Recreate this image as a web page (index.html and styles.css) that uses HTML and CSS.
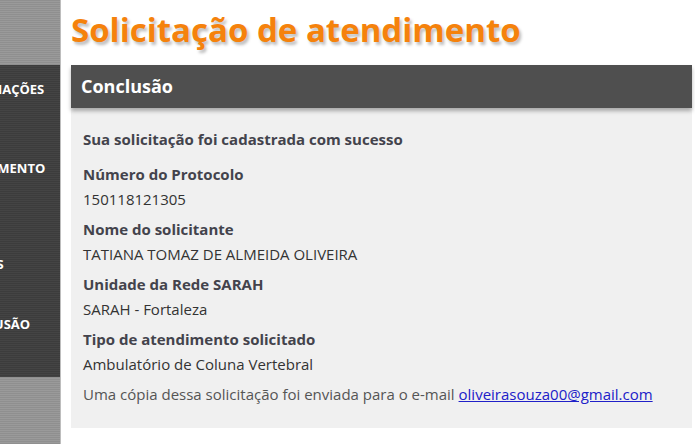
FILE: index.html
```html
<!DOCTYPE html>
<html lang="pt-BR">
<head>
<meta charset="utf-8">
<title>Solicitação de atendimento</title>
<link rel="stylesheet" href="styles.css">
</head>
<body>
<aside class="sidebar">
  <div class="side-top"></div>
  <nav class="side-nav">
    <ul class="steps">
      <li class="step step-1">INFORMAÇÕES</li>
      <li class="step step-2">ATENDIMENTO</li>
      <li class="step step-3">PESSOAIS</li>
      <li class="step step-4">CONCLUSÃO</li>
    </ul>
  </nav>
  <div class="side-bottom"></div>
</aside>
<main class="main">
  <h1 class="title">Solicitação de atendimento</h1>
  <section class="panel">
    <h2 class="panel-header">Conclusão</h2>
    <div class="panel-body">
      <p class="success">Sua solicitação foi cadastrada com sucesso</p>
      <div class="field">
        <div class="label">Número do Protocolo</div>
        <div class="value">150118121305</div>
      </div>
      <div class="field">
        <div class="label">Nome do solicitante</div>
        <div class="value">TATIANA TOMAZ DE ALMEIDA OLIVEIRA</div>
      </div>
      <div class="field">
        <div class="label">Unidade da Rede SARAH</div>
        <div class="value">SARAH - Fortaleza</div>
      </div>
      <div class="field">
        <div class="label">Tipo de atendimento solicitado</div>
        <div class="value">Ambulatório de Coluna Vertebral</div>
      </div>
      <p class="note">Uma cópia dessa solicitação foi enviada para o e-mail <a href="#" class="mail">oliveirasouza00@gmail.com</a></p>
    </div>
  </section>
</main>
</body>
</html>
```
FILE: styles.css
```css
html, body {
  margin: 0;
  padding: 0;
  height: 100%;
}
body {
  display: flex;
  font-family: "Open Sans", "Noto Sans", sans-serif;
  background: #fff;
  overflow: hidden;
}
.sidebar {
  width: 61px;
  flex: none;
  display: flex;
  flex-direction: column;
  border-right: 1px solid #bdbdbd;
  box-sizing: border-box;
}
.side-top, .side-bottom {
  background: repeating-linear-gradient(to bottom, #8f8f8f 0, #8f8f8f 1px, #9a9a9a 1px, #9a9a9a 2px);
}
.side-top {
  height: 65px;
}
.side-bottom {
  flex: 1;
}
.side-nav {
  height: 312px;
  overflow: hidden;
  background: repeating-linear-gradient(to bottom, #3c3c3c 0, #3c3c3c 1px, #444 1px, #444 2px);
}
.steps {
  list-style: none;
  margin: 0 0 0 -51px;
  padding: 0;
  white-space: nowrap;
}
.step {
  color: #fff;
  font-weight: 700;
  font-size: 13px;
  line-height: 16px;
}
.step-1 { padding-top: 16px; }
.step-2 { padding-top: 63px; }
.step-3 { padding-top: 80px; margin-left: -6px; }
.step-4 { padding-top: 44px; }

.main {
  flex: 1;
  padding: 0 3px 0 10px;
}
.title {
  margin: 10px 0 15px;
  font-size: 33px;
  line-height: 40px;
  font-weight: 700;
  color: #f5820c;
  text-shadow: 2px 3px 3px rgba(0, 0, 0, 0.25);
  white-space: nowrap;
}
.panel {
  background: #f0f0f0;
}
.panel-header {
  margin: 0;
  height: 43px;
  line-height: 43px;
  padding-left: 10px;
  background: #4f4f4f;
  color: #fff;
  font-size: 18px;
  font-weight: 700;
  box-shadow: 0 3px 4px rgba(0, 0, 0, 0.3);
  position: relative;
}
.panel-body {
  padding: 19px 12px 21px;
  font-size: 15px;
  line-height: 25px;
}
.success {
  margin: 0 0 10px;
  font-weight: 700;
  color: #43434c;
}
.field + .field {
  margin-top: 5px;
}
.label {
  font-weight: 700;
  color: #43434c;
}
.value {
  color: #333;
}
.note {
  margin: 5px 0 0;
  color: #555;
}
.mail {
  color: #2020c8;
  text-decoration: underline;
}
```
